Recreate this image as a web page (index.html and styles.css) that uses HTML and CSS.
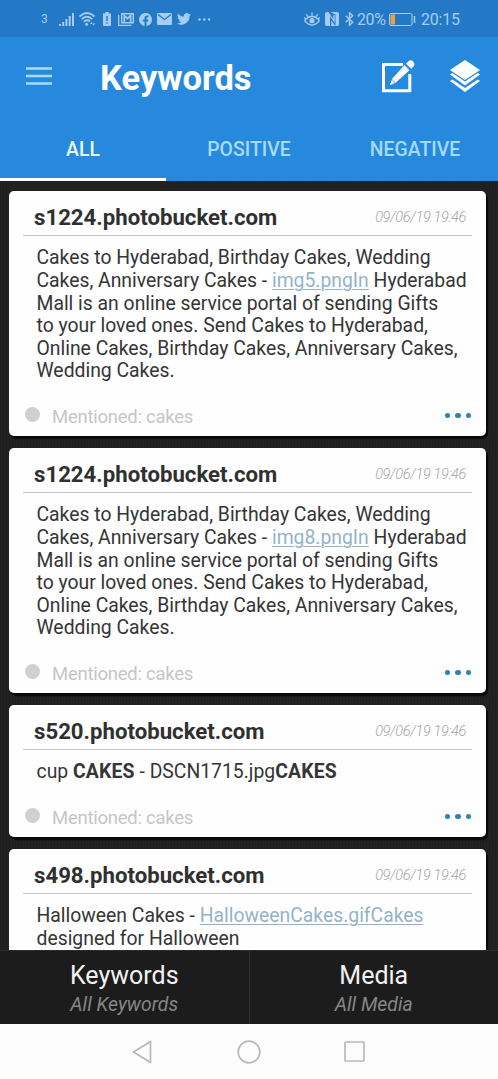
FILE: index.html
```html
<!DOCTYPE html>
<html lang="en">
<head>
<meta charset="utf-8">
<title>Keywords</title>
<link rel="stylesheet" href="styles.css">
</head>
<body>
<div class="screen">
  <div class="status">
    <div class="status-left">
      <span class="sim">3</span>
      <svg class="i-signal" width="15" height="13" viewBox="0 0 15 13"><path d="M0 11h2v2H0zM3.200 9h2v4h-2zM6.400 6h2v7h-2zM9.700 3h2v10h-2zM13 0h2v13h-2z" fill="currentColor"/></svg>
      <svg class="i-wifi" width="16" height="14" viewBox="0 0 16 14"><g fill="none" stroke="currentColor" stroke-width="1.800"><path d="M.5 4.500q7.500-7 15 0M2.700 7.200q5.300-5 10.600 0M4.800 9.800q3.200-3 6.200-.4"/></g><circle cx="7.700" cy="12.200" r="1.500" fill="currentColor"/><path d="M11 12l1.500-2 1.500 2zM13 11.500l1.500 2 1.500-2z" fill="currentColor"/></svg>
      <svg class="i-batt" width="8" height="14" viewBox="0 0 8 14"><path fill="currentColor" fill-rule="evenodd" d="M2.300 0h3.400v1.500H8V13q0 1-1 1H1q-1 0-1-1V1.500h2.300zM3.300 4v5h1.400V4zM3.300 10.300v1.500h1.400v-1.500z"/></svg>
      <svg class="i-gmail" width="16" height="13" viewBox="0 0 16 13"><path d="M.7 2v10.300H13.500" fill="none" stroke="currentColor" stroke-width="1.300"/><path d="M3.700.7h11.600v9.100H3.700z" fill="none" stroke="currentColor" stroke-width="1.400"/><path d="M6.300 9.500V2.500l3.200 3 3.200-3v7" fill="none" stroke="currentColor" stroke-width="1.700"/></svg>
      <svg class="i-fb" width="13" height="13" viewBox="0 0 13 13"><path fill="currentColor" d="M13 6.500A6.500 6.500 0 1 0 5.500 12.900V8.400H3.800V6.500h1.700V5c0-1.700 1-2.600 2.500-2.600l1.500.1v1.700h-.9c-.8 0-1.100.5-1.100 1.100v1.200h1.900l-.3 1.900H7.500v4.500A6.500 6.500 0 0 0 13 6.500z"/></svg>
      <svg class="i-mail" width="15" height="12" viewBox="0 0 15 12"><rect width="15" height="12" rx="1" fill="currentColor"/><path d="M1 1.500l6.500 5 6.500-5" fill="none" stroke="#2378c5" stroke-width="1.200"/></svg>
      <svg class="i-bird" width="14" height="12" viewBox="0 0 24 20"><path fill="currentColor" d="M24 2.400a10 10 0 0 1-2.800.8A5 5 0 0 0 23.300.4a10 10 0 0 1-3.100 1.200A4.900 4.900 0 0 0 11.700 6 14 14 0 0 1 1.700.9a4.900 4.900 0 0 0 1.500 6.600A5 5 0 0 1 1 6.900 4.900 4.900 0 0 0 5 11.800a5 5 0 0 1-2.200.1 4.900 4.900 0 0 0 4.600 3.400A10 10 0 0 1 0 17.500 14 14 0 0 0 21.500 5 10 10 0 0 0 24 2.400z"/></svg>
      <svg class="i-more" width="13" height="3" viewBox="0 0 13 3"><g fill="currentColor"><circle cx="1.500" cy="1.500" r="1.200"/><circle cx="6.300" cy="1.500" r="1.200"/><circle cx="11.100" cy="1.500" r="1.200"/></g></svg>
    </div>
    <div class="status-right">
      <svg width="16" height="14" viewBox="0 0 16 14"><path d="M.7 8.700Q4 4.500 8 4.500t7.300 4.200Q12 13 8 13T.7 8.700zM8 4V.5M4.200 5L2.300 2.200M11.800 5l1.900-2.800M1.800 7L.2 5.500M14.200 7l1.600-1.500" fill="none" stroke="currentColor" stroke-width="1.300"/><circle cx="8" cy="8.700" r="2.600" fill="currentColor"/></svg>
      <svg class="i-nfc" width="14" height="14" viewBox="0 0 14 14"><path fill="currentColor" d="M2 0h1.500L8.300 7V2.500l1.500 1V11L5 4.300V14H2q-2 0-2-2V2q0-2 2-2zM5.500 0H12q2 0 2 2v10q0 2-2 2H6.200V8.500L10.500 14V2.500z"/></svg>
      <svg class="i-bt" width="9" height="14" viewBox="0 0 9 14"><path d="M.7 3.700l7 6.500-3.200 3V.8l3.200 3-7 6.500" fill="none" stroke="currentColor" stroke-width="1.400"/></svg>
      <span class="pct">20%</span>
      <svg class="i-level" width="27" height="13" viewBox="0 0 27 13"><rect x=".5" y=".5" width="22.500" height="12" rx="1.500" fill="none" stroke="currentColor"/><rect x="1.500" y="1.500" width="4.500" height="10" fill="#e9a23f"/><path d="M25.500 3v7" stroke="currentColor" stroke-width="1.500"/></svg>
      <span class="clock">20:15</span>
    </div>
  </div>

  <header class="bar">
    <svg class="menu" width="26" height="18" viewBox="0 0 26 18"><path d="M0 1.500h26M0 9h26M0 16.500h26" stroke="#a9defb" stroke-width="2.600"/></svg>
    <h1 class="title">Keywords</h1>
    <svg class="edit" width="33" height="33" viewBox="0 0 33 33"><path d="M21 4.500H1.500v26.300h26.300V14" fill="none" stroke="#fff" stroke-width="3"/><path d="M22.300 4.700l5.700 5.600L13.700 23.200 7 26.200l2.700-7.500z" fill="#fff" stroke="#2789de" stroke-width="1"/><path d="M24 3.700L26.300 1.400q2.400-2.200 4.800 0t.3 5L29.300 8.800z" fill="#fff"/><path d="M10 19.500l3.200 3.100" stroke="#2789de" stroke-width=".8"/></svg>
    <svg class="layers" width="30" height="33" viewBox="0 0 30 33"><path fill="#fff" d="M15 0l15 10-15 10L0 10zM0 14.500l2.300-1.500L15 21.600 27.700 13l2.300 1.500L15 25.500zM0 21l2.300-1.600L15 28l12.700-8.600L30 21 15 32z"/></svg>
  </header>

  <nav class="tabs">
    <div class="tab active">ALL</div>
    <div class="tab">POSITIVE</div>
    <div class="tab">NEGATIVE</div>
  </nav>

  <main class="feed">
    <article class="card">
      <div class="head"><h2 class="site">s1224.photobucket.com</h2><time class="date">09/06/19 19:46</time></div>
      <p class="text">Cakes to Hyderabad, Birthday Cakes, Wedding<br>Cakes, Anniversary Cakes - <a class="link">img5.pngIn</a> Hyderabad<br>Mall is an online service portal of sending Gifts<br>to your loved ones. Send Cakes to Hyderabad,<br>Online Cakes, Birthday Cakes, Anniversary Cakes,<br>Wedding Cakes.</p>
      <div class="foot"><i class="mood"></i><span class="mention">Mentioned: cakes</span><span class="dots"><i></i><i></i><i></i></span></div>
    </article>
    <article class="card">
      <div class="head"><h2 class="site">s1224.photobucket.com</h2><time class="date">09/06/19 19:46</time></div>
      <p class="text">Cakes to Hyderabad, Birthday Cakes, Wedding<br>Cakes, Anniversary Cakes - <a class="link">img8.pngIn</a> Hyderabad<br>Mall is an online service portal of sending Gifts<br>to your loved ones. Send Cakes to Hyderabad,<br>Online Cakes, Birthday Cakes, Anniversary Cakes,<br>Wedding Cakes.</p>
      <div class="foot"><i class="mood"></i><span class="mention">Mentioned: cakes</span><span class="dots"><i></i><i></i><i></i></span></div>
    </article>
    <article class="card">
      <div class="head"><h2 class="site">s520.photobucket.com</h2><time class="date">09/06/19 19:46</time></div>
      <p class="text">cup <b>CAKES</b> - DSCN1715.jpg<b>CAKES</b></p>
      <div class="foot"><i class="mood"></i><span class="mention">Mentioned: cakes</span><span class="dots"><i></i><i></i><i></i></span></div>
    </article>
    <article class="card">
      <div class="head"><h2 class="site">s498.photobucket.com</h2><time class="date">09/06/19 19:46</time></div>
      <p class="text">Halloween Cakes - <a class="link">HalloweenCakes.gifCakes</a><br>designed for Halloween</p>
      <div class="foot"></div>
    </article>
  </main>

  <div class="filters">
    <div class="filter"><span class="name">Keywords</span><span class="value">All Keywords</span></div>
    <div class="filter"><span class="name">Media</span><span class="value">All Media</span></div>
  </div>

  <div class="sysnav">
    <svg width="20" height="24" viewBox="0 0 20 24"><path d="M18.500 1.500v21L1.500 12z" fill="none" stroke="#b9b9b9" stroke-width="1.700" stroke-linejoin="round"/></svg>
    <svg class="home" width="24" height="24" viewBox="0 0 24 24"><circle cx="12" cy="12" r="10.800" fill="none" stroke="#b9b9b9" stroke-width="1.700"/></svg>
    <svg class="recent" width="21" height="21" viewBox="0 0 21 21"><rect x="1" y="1" width="19" height="19" rx=".8" fill="none" stroke="#b9b9b9" stroke-width="1.700"/></svg>
  </div>
</div>
</body>
</html>
```
FILE: styles.css
```css
* { box-sizing: border-box; }
body { margin: 0; font-family: Roboto, "Liberation Sans", sans-serif; }
svg { display: block; flex: none; }
.screen { width: 498px; height: 1079px; display: flex; flex-direction: column; overflow: hidden; background: #202020; }

.status { flex: none; height: 37px; background: #2379c6; color: #a5cdf2; display: flex; justify-content: space-between; padding: 0 38px 0 41px; }
.status-left, .status-right { display: flex; align-items: center; height: 38px; }
.sim { width: 7px; font-size: 12px; }
.i-signal { margin-left: 11px; }
.i-wifi { margin-left: 5px; }
.i-batt { margin-left: 8px; }
.i-gmail { margin-left: 7px; }
.i-fb, .i-mail, .i-bird { margin-left: 5px; }
.i-more { margin-left: 7px; }
.i-nfc { margin-left: 5px; }
.i-bt { margin-left: 6px; }
.pct { margin-left: 3px; width: 32px; font-size: 16px; letter-spacing: -0.4px; }
.clock { margin-left: 5px; width: 39px; font-size: 16px; letter-spacing: -0.2px; white-space: nowrap; }

.bar { flex: none; height: 81px; background: #2789de; display: flex; align-items: center; padding: 0 18px 2px 26px; }
.menu { margin-top: -2px; }
.title { margin: 0 0 0 48px; font-size: 34.500px; line-height: 40px; font-weight: 700; color: #fff; letter-spacing: 0; padding-top: 3px; flex: 1; }
.layers { margin-left: 35px; }

.tabs { flex: none; height: 63px; background: #2789de; display: flex; }
.tab { flex: 1; text-align: center; font-size: 19.400px; line-height: 64px; height: 63px; font-weight: 500; color: #a3dcfc; border-bottom: 3px solid transparent; }
.tab.active { color: #e9fbff; border-bottom-color: #fff; }

.feed { flex: 1; min-height: 0; overflow: hidden; padding: 10px 12px 0 9px; display: flex; flex-direction: column; gap: 12px; background: repeating-linear-gradient(90deg, #1f1f1f 0 1px, #222 1px 3px); }
.card { flex: none; background: #fefefe; border-radius: 5px; box-shadow: 2px 3px 1px #080808; }
.head { height: 45px; margin: 0 14px; padding: 8px 6px 0 11px; display: flex; justify-content: space-between; border-bottom: 1px solid #c6c6c6; }
.site { margin: 0; font-size: 22.200px; line-height: 37px; font-weight: 700; color: #303030; }
.date { font-size: 14.500px; line-height: 37px; letter-spacing: -0.350px; font-style: italic; font-weight: 300; color: #a6a6a6; }
.text { margin: 0; padding: 11.400px 0 0 27.500px; font-size: 19.350px; line-height: 22.600px; color: #353535; white-space: nowrap; }
.text b { letter-spacing: 0.2px; }
.link { color: #94b3cb; text-decoration: underline; text-decoration-thickness: 1px; text-underline-offset: 2px; }
.foot { height: 53px; padding: 18px 15px 0 16px; display: flex; align-items: center; }
.mood { width: 15px; height: 15px; border-radius: 50%; background: #d0d0d0; margin-top: -7px; }
.mention { margin-left: 12px; font-size: 18.500px; letter-spacing: -0.250px; line-height: 24px; color: #c6c6c6; margin-top: -3px; }
.dots { margin-left: auto; margin-top: -6px; display: flex; gap: 5px; }
.dots i { width: 5.500px; height: 5.500px; border-radius: 50%; background: #2d83b0; }

.filters { flex: none; height: 74px; background: #1c1c1c; display: flex; border-top: 1px solid #2b2b2b; }
.filter { flex: 1; display: flex; flex-direction: column; align-items: center; }
.filter + .filter { border-left: 1px solid #333; }
.name { font-size: 25px; line-height: 30px; margin-top: 10px; color: #f2f2f2; }
.value { font-size: 19.400px; line-height: 24px; margin-top: 2px; font-style: italic; color: #868686; }

.sysnav { flex: none; height: 55px; background: #fcfcfc; display: flex; align-items: center; padding-left: 132px; }
.home { margin-left: 85px; }
.recent { margin-left: 83px; }
```
